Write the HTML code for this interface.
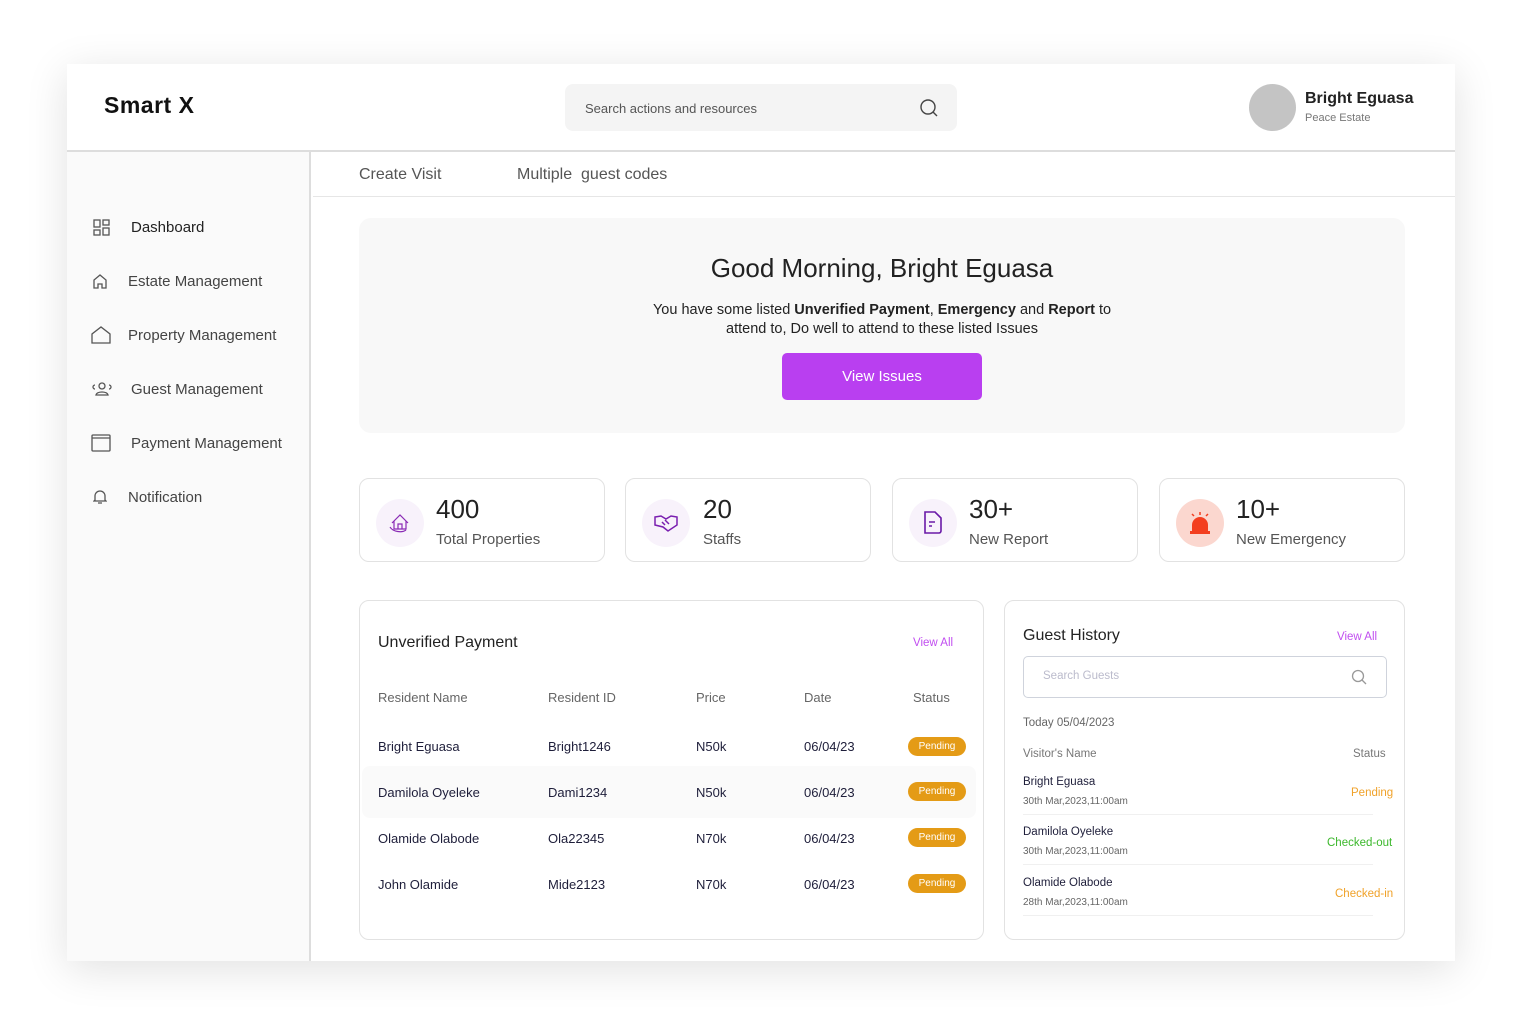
<!DOCTYPE html>
<html><head><meta charset="utf-8"><style>
*{margin:0;padding:0;box-sizing:border-box}
body{width:1523px;height:1032px;background:#fff;font-family:"Liberation Sans",sans-serif;position:relative;overflow:hidden;color:#222}
.a{position:absolute}
.frame{left:67px;top:64px;width:1388px;height:897px;background:#fff;box-shadow:0 8px 40px rgba(0,0,0,.12)}
.card{border:1px solid #e2e2e2;border-radius:10px;background:#fff}
.nav{font-size:15px;color:#444}
.th{font-size:13px;color:#666}
.td{font-size:13px;color:#1e1e3a}
.pill{background:#e49b16;color:#fff;font-size:10px;border-radius:10px;width:58px;height:19px;line-height:19px;text-align:center}
.ic{fill:none;stroke:#555;stroke-width:1.3}
</style></head><body>
<div class="a frame"></div>
<!-- header -->
<div class="a" style="left:67px;top:150px;width:1388px;height:2px;background:#ddd"></div>
<div class="a" style="left:104px;top:92px;font-size:23px;font-weight:bold;color:#111;letter-spacing:.5px">Smart X</div>
<div class="a" style="left:565px;top:84px;width:392px;height:47px;background:#f4f4f4;border-radius:8px"></div>
<div class="a" style="left:585px;top:101px;font-size:13px;color:#555">Search actions and resources</div>
<svg class="a" style="left:919px;top:98px" width="20" height="20"><circle cx="9" cy="9" r="7" fill="none" stroke="#444" stroke-width="1.4"/><path d="M14 14l4 4" stroke="#444" stroke-width="1.4"/></svg>
<div class="a" style="left:1249px;top:84px;width:47px;height:47px;border-radius:50%;background:#c4c4c4"></div>
<div class="a" style="left:1305px;top:90px;font-size:16px;font-weight:bold;color:#222">Bright Eguasa</div>
<div class="a" style="left:1305px;top:112px;font-size:11px;color:#777">Peace Estate</div>
<!-- sidebar -->
<div class="a" style="left:67px;top:152px;width:244px;height:809px;background:#fafafa;border-right:2px solid #ddd"></div>
<svg class="a" style="left:93px;top:219px" width="18" height="18"><g class="ic"><rect x="1" y="1" width="6" height="7"/><rect x="10" y="1" width="6" height="5"/><rect x="1" y="11" width="6" height="5"/><rect x="10" y="9" width="6" height="7"/></g></svg>
<div class="a nav" style="left:131px;top:219px;color:#222">Dashboard</div>
<svg class="a" style="left:92px;top:273px" width="16" height="16"><path class="ic" d="M2 15V7l6-5 6 5v8h-4v-4H6v4z"/></svg>
<div class="a nav" style="left:128px;top:273px">Estate Management</div>
<svg class="a" style="left:91px;top:326px" width="20" height="18"><path class="ic" d="M1 17V8l9-7 9 7v9z"/></svg>
<div class="a nav" style="left:128px;top:327px">Property Management</div>
<svg class="a" style="left:92px;top:381px" width="20" height="16"><g class="ic"><circle cx="10" cy="5" r="3"/><path d="M4 14c1-4 11-4 12 0zM3 4a2 2 0 0 0 0 4M17 4a2 2 0 0 1 0 4"/></g></svg>
<div class="a nav" style="left:131px;top:381px">Guest Management</div>
<svg class="a" style="left:91px;top:434px" width="20" height="18"><g class="ic"><rect x="1" y="1" width="18" height="16" rx="1"/><path d="M1 4h18"/></g></svg>
<div class="a nav" style="left:131px;top:435px">Payment Management</div>
<svg class="a" style="left:93px;top:489px" width="14" height="16"><path class="ic" d="M2 11V7a5 5 0 0 1 10 0v4l1 1H1zM5 14h4"/></svg>
<div class="a nav" style="left:128px;top:489px">Notification</div>
<!-- tabs -->
<div class="a" style="left:313px;top:196px;width:1142px;height:1px;background:#e6e6e6"></div>
<div class="a" style="left:359px;top:166px;font-size:16px;color:#555">Create Visit</div>
<div class="a" style="left:517px;top:166px;font-size:16px;color:#555">Multiple&nbsp; guest codes</div>
<!-- greeting -->
<div class="a" style="left:359px;top:218px;width:1046px;height:215px;background:#f8f8f8;border-radius:12px"></div>
<div class="a" style="left:359px;top:253px;width:1046px;text-align:center;font-size:26px;color:#222">Good Morning, Bright Eguasa</div>
<div class="a" style="left:359px;top:301px;width:1046px;text-align:center;font-size:14.5px;line-height:19px;color:#222">You have some listed <b>Unverified Payment</b>, <b>Emergency</b> and <b>Report</b> to<br>attend to, Do well to attend to these listed Issues</div>
<div class="a" style="left:782px;top:353px;width:200px;height:47px;background:#b93ff0;border-radius:5px;color:#fff;font-size:15px;text-align:center;line-height:47px">View Issues</div>
<!-- stats -->
<div class="a card" style="left:359px;top:478px;width:246px;height:84px"></div>
<div class="a card" style="left:625px;top:478px;width:246px;height:84px"></div>
<div class="a card" style="left:892px;top:478px;width:246px;height:84px"></div>
<div class="a card" style="left:1159px;top:478px;width:246px;height:84px"></div>
<div class="a" style="left:376px;top:499px;width:48px;height:48px;border-radius:50%;background:#f8f2fb"></div>
<div class="a" style="left:642px;top:499px;width:48px;height:48px;border-radius:50%;background:#f8f2fb"></div>
<div class="a" style="left:909px;top:499px;width:48px;height:48px;border-radius:50%;background:#f8f2fb"></div>
<div class="a" style="left:1176px;top:499px;width:48px;height:48px;border-radius:50%;background:#fbd7cf"></div>
<svg class="a" style="left:388px;top:511px" width="24" height="24"><g fill="none" stroke="#8a2bb5" stroke-width="1.2"><path d="M4 12l8-8 8 8M6 10v8h12v-8M10 18v-5h4v5"/><path d="M2 16c3 5 12 6 16 3"/></g></svg>
<svg class="a" style="left:654px;top:513px" width="24" height="20"><g fill="none" stroke="#7a1fb0" stroke-width="1.5"><path d="M1 4l6-1 5 3 5-3 6 1v8l-9 6-5-4-8-2z"/><path d="M8 9l3 3M11 7l4 4"/></g></svg>
<svg class="a" style="left:922px;top:510px" width="22" height="26"><g fill="none" stroke="#6a1aa8" stroke-width="1.6"><path d="M3 2h10l6 6v13a2 2 0 0 1-2 2H3z"/><path d="M7 12h6M7 16h3"/></g></svg>
<svg class="a" style="left:1187px;top:511px" width="26" height="24"><g fill="#f33e1f"><path d="M5 22V14a8 8 0 0 1 16 0v8z"/><rect x="3" y="20" width="20" height="3"/></g><g stroke="#f33e1f" stroke-width="1.5"><path d="M13 1v3M5 3l2 2M21 3l-2 2"/></g></svg>
<div class="a" style="left:436px;top:494px;font-size:26px;color:#222">400</div>
<div class="a" style="left:436px;top:531px;font-size:15px;color:#555">Total Properties</div>
<div class="a" style="left:703px;top:494px;font-size:26px;color:#222">20</div>
<div class="a" style="left:703px;top:531px;font-size:15px;color:#555">Staffs</div>
<div class="a" style="left:969px;top:494px;font-size:26px;color:#222">30+</div>
<div class="a" style="left:969px;top:531px;font-size:15px;color:#555">New Report</div>
<div class="a" style="left:1236px;top:494px;font-size:26px;color:#222">10+</div>
<div class="a" style="left:1236px;top:531px;font-size:15px;color:#555">New Emergency</div>
<!-- unverified payment -->
<div class="a card" style="left:359px;top:600px;width:625px;height:340px"></div>
<div class="a" style="left:378px;top:634px;font-size:16px;color:#222">Unverified Payment</div>
<div class="a" style="left:913px;top:637px;font-size:11.5px;color:#c14ef0">View All</div>
<div class="a th" style="left:378px;top:690px">Resident Name</div>
<div class="a th" style="left:548px;top:690px">Resident ID</div>
<div class="a th" style="left:696px;top:690px">Price</div>
<div class="a th" style="left:804px;top:690px">Date</div>
<div class="a th" style="left:913px;top:690px">Status</div>
<div class="a" style="left:362px;top:766px;width:614px;height:52px;background:#fafafa;border-radius:8px"></div>
<div class="a td" style="left:378px;top:739px">Bright Eguasa</div><div class="a td" style="left:548px;top:739px">Bright1246</div><div class="a td" style="left:696px;top:739px">N50k</div><div class="a td" style="left:804px;top:739px">06/04/23</div><div class="a pill" style="left:908px;top:737px">Pending</div>
<div class="a td" style="left:378px;top:785px">Damilola Oyeleke</div><div class="a td" style="left:548px;top:785px">Dami1234</div><div class="a td" style="left:696px;top:785px">N50k</div><div class="a td" style="left:804px;top:785px">06/04/23</div><div class="a pill" style="left:908px;top:782px">Pending</div>
<div class="a td" style="left:378px;top:831px">Olamide Olabode</div><div class="a td" style="left:548px;top:831px">Ola22345</div><div class="a td" style="left:696px;top:831px">N70k</div><div class="a td" style="left:804px;top:831px">06/04/23</div><div class="a pill" style="left:908px;top:828px">Pending</div>
<div class="a td" style="left:378px;top:877px">John Olamide</div><div class="a td" style="left:548px;top:877px">Mide2123</div><div class="a td" style="left:696px;top:877px">N70k</div><div class="a td" style="left:804px;top:877px">06/04/23</div><div class="a pill" style="left:908px;top:874px">Pending</div>
<!-- guest history -->
<div class="a card" style="left:1004px;top:600px;width:401px;height:340px"></div>
<div class="a" style="left:1023px;top:627px;font-size:16px;color:#222">Guest History</div>
<div class="a" style="left:1337px;top:631px;font-size:11.5px;color:#c14ef0">View All</div>
<div class="a" style="left:1023px;top:656px;width:364px;height:42px;border:1px solid #cfd3dc;border-radius:5px"></div>
<div class="a" style="left:1043px;top:670px;font-size:11.5px;color:#bbc">Search Guests</div>
<svg class="a" style="left:1351px;top:669px" width="16" height="16"><circle cx="7" cy="7" r="5.5" fill="none" stroke="#999" stroke-width="1.3"/><path d="M11 11l4 4" stroke="#999" stroke-width="1.3"/></svg>
<div class="a" style="left:1023px;top:717px;font-size:11.5px;color:#666">Today 05/04/2023</div>
<div class="a" style="left:1023px;top:748px;font-size:11.5px;color:#777">Visitor's Name</div>
<div class="a" style="left:1353px;top:748px;font-size:11.5px;color:#777">Status</div>
<div class="a" style="left:1023px;top:776px;font-size:11.5px;color:#1e1e3a">Bright Eguasa</div>
<div class="a" style="left:1023px;top:796px;font-size:10px;color:#666">30th Mar,2023,11:00am</div>
<div class="a" style="left:1351px;top:787px;font-size:11.5px;color:#f0a22a">Pending</div>
<div class="a" style="left:1023px;top:814px;width:350px;height:1px;background:#f0f0f0"></div>
<div class="a" style="left:1023px;top:826px;font-size:11.5px;color:#1e1e3a">Damilola Oyeleke</div>
<div class="a" style="left:1023px;top:846px;font-size:10px;color:#666">30th Mar,2023,11:00am</div>
<div class="a" style="left:1327px;top:837px;font-size:11.5px;color:#3cb82c">Checked-out</div>
<div class="a" style="left:1023px;top:864px;width:350px;height:1px;background:#f0f0f0"></div>
<div class="a" style="left:1023px;top:877px;font-size:11.5px;color:#1e1e3a">Olamide Olabode</div>
<div class="a" style="left:1023px;top:897px;font-size:10px;color:#666">28th Mar,2023,11:00am</div>
<div class="a" style="left:1335px;top:888px;font-size:11.5px;color:#f0a22a">Checked-in</div>
<div class="a" style="left:1023px;top:915px;width:350px;height:1px;background:#f0f0f0"></div>
</body></html>
